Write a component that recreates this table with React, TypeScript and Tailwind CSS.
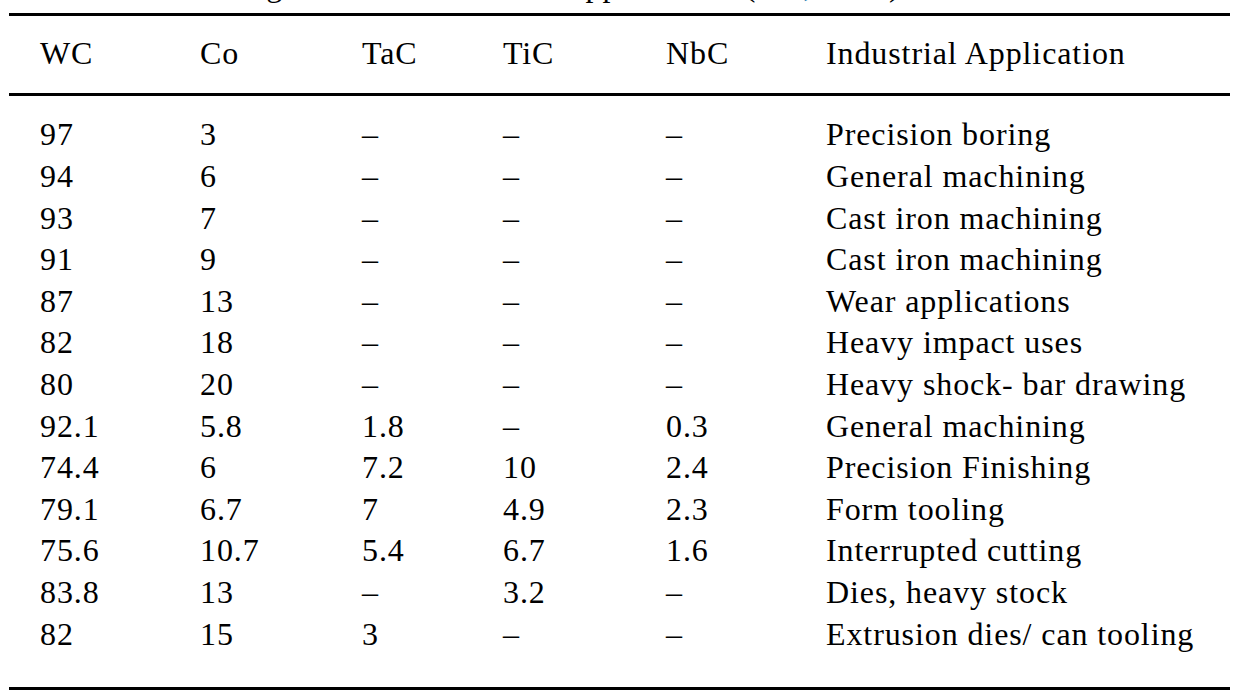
import React from "react";

// composición (%) y aplicación industrial
const headers = ["WC", "Co", "TaC", "TiC", "NbC", "Industrial Application"];

const rows: string[][] = [
  ["97", "3", "–", "–", "–", "Precision boring"],
  ["94", "6", "–", "–", "–", "General machining"],
  ["93", "7", "–", "–", "–", "Cast iron machining"],
  ["91", "9", "–", "–", "–", "Cast iron machining"],
  ["87", "13", "–", "–", "–", "Wear applications"],
  ["82", "18", "–", "–", "–", "Heavy impact uses"],
  ["80", "20", "–", "–", "–", "Heavy shock- bar drawing"],
  ["92.1", "5.8", "1.8", "–", "0.3", "General machining"],
  ["74.4", "6", "7.2", "10", "2.4", "Precision Finishing"],
  ["79.1", "6.7", "7", "4.9", "2.3", "Form tooling"],
  ["75.6", "10.7", "5.4", "6.7", "1.6", "Interrupted cutting"],
  ["83.8", "13", "–", "3.2", "–", "Dies, heavy stock"],
  ["82", "15", "3", "–", "–", "Extrusion dies/ can tooling"],
];

const gridCols = "grid grid-cols-[160px_162px_141px_163px_160px_1fr] pl-[31px]";

const Row: React.FC<{ cells: string[] }> = ({ cells }) => (
  <div className={`${gridCols} leading-[41.6px] whitespace-nowrap`}>
    {cells.map((c, i) => (
      <div key={i}>{c}</div>
    ))}
  </div>
);

const App: React.FC = () => {
  return (
    <div
      className="w-[1251px] h-[695px] overflow-hidden bg-white text-black text-[32px] tracking-[0.9px]"
      style={{ fontFamily: '"Liberation Serif", "Times New Roman", serif' }}
    >
      <div className="ml-[9px] w-[1221px]">
        {/* caption cortada arriba: solo se ven los descendentes */}
        <div className="h-[13px] overflow-hidden">
          <div className="mt-[-31px] pl-[31px] leading-[32px] whitespace-nowrap">
            Table 3 Carbide grades and their main applications (
            <span className="text-[#2a7ab0]">Liu, 2019</span>).
          </div>
        </div>

        <div className="border-t-[3px] border-black pt-[17.4px] pb-[18px]">
          <Row cells={headers} />
        </div>

        <div className="border-t-[3px] border-black pt-[18.4px] pb-[32px]">
          {rows.map((r, i) => (
            <Row key={i} cells={r} />
          ))}
        </div>

        <div className="border-t-[3px] border-black" />
      </div>
    </div>
  );
};

export default App;
